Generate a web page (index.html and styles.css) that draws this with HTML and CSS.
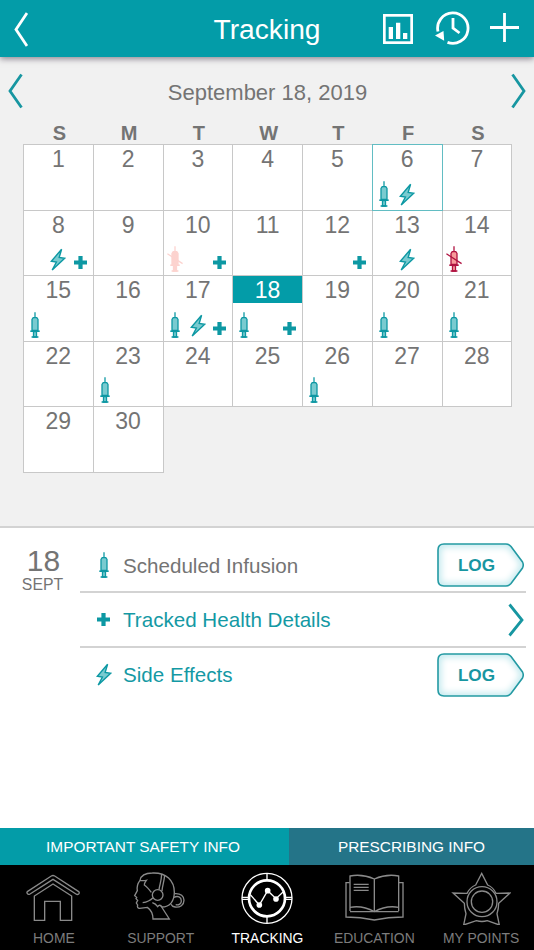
FILE: index.html
```html
<!DOCTYPE html>
<html lang="en">

<head>
    <meta charset="utf-8" />
    <title>Tracking</title>
    <meta name="viewport" content="width=device-width, initial-scale=1">
    <link rel="stylesheet" href="styles.css">
</head>

<body>
    <!-- shared icons -->
    <svg class="sprite" width="0" height="0">
        <defs>
            <filter id="glow" x="-20%" y="-20%" width="140%" height="140%">
                <feGaussianBlur stdDeviation="3" />
            </filter>
            <clipPath id="tag-clip">
                <path d="M7 1H69Q72 1 74 3.500L85.500 19Q87 22 85.500 25L74 40.500Q72 43 69 43H7Q1 43 1 37V7Q1 1 7 1Z" />
            </clipPath>
            <symbol id="syringe" viewBox="0 0 10 26">
                <path d="M5 0.300V6" stroke="currentColor" stroke-width="1.300" />
                <path class="tint" d="M2 18.500V7.500L3.200 5.700H6.800L8 7.500V18.500Z" stroke="currentColor" stroke-width="1.300" />
                <path d="M0.300 19.200H9.700" stroke="currentColor" stroke-width="1.600" />
                <path class="tint" d="M3.500 19.500V25H6.500V19.500Z" stroke="currentColor" stroke-width="1.300" />
                <path d="M1.600 25H8.400" stroke="currentColor" stroke-width="1.600" />
            </symbol>
            <symbol id="missed" viewBox="0 0 16 26">
                <use href="#syringe" x="3" y="0" width="10" height="26" />
                <path d="M0.400 7.800L15.600 17.600" stroke="currentColor" stroke-width="1.300" />
            </symbol>
            <symbol id="bolt" viewBox="0 0 16 24">
                <path class="tint" d="M11.600 1.300L1.300 13.300L6.400 14L2.200 22L14.700 10.200L9.200 9.400Z" stroke="currentColor" stroke-width="1.400" />
            </symbol>
            <symbol id="plus" viewBox="0 0 13 13">
                <path d="M4.400 0H8.600V4.400H13V8.600H8.600V13H4.400V8.600H0V4.400H4.400Z" fill="currentColor" />
            </symbol>
            <symbol id="tag" viewBox="0 0 87 44">
                <g clip-path="url(#tag-clip)">
                    <path d="M7 1H69Q72 1 74 3.500L85.500 19Q87 22 85.500 25L74 40.500Q72 43 69 43H7Q1 43 1 37V7Q1 1 7 1Z" fill="#fff" stroke="#bfe9ee" stroke-width="7" filter="url(#glow)" />
                </g>
                <path d="M7 1H69Q72 1 74 3.500L85.500 19Q87 22 85.500 25L74 40.500Q72 43 69 43H7Q1 43 1 37V7Q1 1 7 1Z" fill="none" stroke="#249aa3" stroke-width="1.600" />
            </symbol>
        </defs>
    </svg>

    <div class="app">
        <header class="header">
            <svg class="back" width="14" height="36" viewBox="0 0 14 36"><path d="M13 2L2 18.500L13 35" /></svg>
            <h1>Tracking</h1>
            <div class="actions">
                <svg width="30" height="30" viewBox="0 0 30 30">
                    <rect x="1.300" y="1.300" width="27.400" height="27.400" />
                    <path class="solid" d="M5.700 13H10V25H5.700ZM13 8.700H17.300V25H13ZM20 19H24.300V25H20Z" />
                </svg>
                <svg class="history" width="35" height="34" viewBox="0 0 35 34">
                    <path d="M3 20.500A15.200 15.200 0 1 1 12.500 31.400" />
                    <path d="M18 7V17L24.500 22" />
                    <path class="solid" d="M0 24.500L8.500 20L9.200 29.800Z" />
                </svg>
                <svg class="add" width="29" height="29" viewBox="0 0 29 29"><path d="M14.500 0V29M0 14.500H29" /></svg>
            </div>
        </header>

        <section class="calendar">
            <div class="month">
                <svg width="15" height="36" viewBox="0 0 15 36"><path d="M13.500 1.500L2 18L13.500 34.500" /></svg>
                <span>September 18, 2019</span>
                <svg width="15" height="36" viewBox="0 0 15 36"><path d="M1.500 1.500L13 18L1.500 34.500" /></svg>
            </div>
            <div class="weekdays">
                <span>S</span><span>M</span><span>T</span><span>W</span><span>T</span><span>F</span><span>S</span>
            </div>
            <div class="days">
                <div class="day"><b>1</b></div>
                <div class="day"><b>2</b></div>
                <div class="day"><b>3</b></div>
                <div class="day"><b>4</b></div>
                <div class="day"><b>5</b></div>
                <div class="day today">
                    <b>6</b>
                    <div class="marks">
                        <svg class="syringe"><use href="#syringe" /></svg>
                        <svg class="bolt"><use href="#bolt" /></svg>
                    </div>
                </div>
                <div class="day"><b>7</b></div>

                <div class="day">
                    <b>8</b>
                    <div class="marks">
                        <svg class="bolt"><use href="#bolt" /></svg>
                        <svg class="plus"><use href="#plus" /></svg>
                    </div>
                </div>
                <div class="day"><b>9</b></div>
                <div class="day">
                    <b>10</b>
                    <div class="marks">
                        <svg class="missed faded"><use href="#missed" /></svg>
                        <svg class="plus"><use href="#plus" /></svg>
                    </div>
                </div>
                <div class="day"><b>11</b></div>
                <div class="day">
                    <b>12</b>
                    <div class="marks"><svg class="plus"><use href="#plus" /></svg></div>
                </div>
                <div class="day">
                    <b>13</b>
                    <div class="marks"><svg class="bolt"><use href="#bolt" /></svg></div>
                </div>
                <div class="day">
                    <b>14</b>
                    <div class="marks"><svg class="missed"><use href="#missed" /></svg></div>
                </div>

                <div class="day">
                    <b>15</b>
                    <div class="marks"><svg class="syringe"><use href="#syringe" /></svg></div>
                </div>
                <div class="day"><b>16</b></div>
                <div class="day">
                    <b>17</b>
                    <div class="marks">
                        <svg class="syringe"><use href="#syringe" /></svg>
                        <svg class="bolt"><use href="#bolt" /></svg>
                        <svg class="plus"><use href="#plus" /></svg>
                    </div>
                </div>
                <div class="day selected">
                    <b>18</b>
                    <div class="marks">
                        <svg class="syringe"><use href="#syringe" /></svg>
                        <svg class="plus"><use href="#plus" /></svg>
                    </div>
                </div>
                <div class="day"><b>19</b></div>
                <div class="day">
                    <b>20</b>
                    <div class="marks"><svg class="syringe"><use href="#syringe" /></svg></div>
                </div>
                <div class="day">
                    <b>21</b>
                    <div class="marks"><svg class="syringe"><use href="#syringe" /></svg></div>
                </div>

                <div class="day"><b>22</b></div>
                <div class="day">
                    <b>23</b>
                    <div class="marks"><svg class="syringe"><use href="#syringe" /></svg></div>
                </div>
                <div class="day"><b>24</b></div>
                <div class="day"><b>25</b></div>
                <div class="day">
                    <b>26</b>
                    <div class="marks"><svg class="syringe"><use href="#syringe" /></svg></div>
                </div>
                <div class="day"><b>27</b></div>
                <div class="day"><b>28</b></div>

                <div class="day"><b>29</b></div>
                <div class="day"><b>30</b></div>
            </div>
        </section>

        <section class="details">
            <div class="date">
                <div class="date-day">18</div>
                <div class="date-month">SEPT</div>
            </div>
            <div class="entries">
                <div class="entry muted">
                    <span class="entry-icon"><svg class="syringe"><use href="#syringe" /></svg></span>
                    <span class="entry-name">Scheduled Infusion</span>
                    <button class="log"><svg><use href="#tag" /></svg><span>LOG</span></button>
                </div>
                <div class="entry">
                    <span class="entry-icon"><svg class="plus"><use href="#plus" /></svg></span>
                    <span class="entry-name">Tracked Health Details</span>
                    <svg class="more" width="16" height="34" viewBox="0 0 16 34"><path d="M1.500 1.500L14 17L1.500 32.500" /></svg>
                </div>
                <div class="entry">
                    <span class="entry-icon"><svg class="bolt"><use href="#bolt" /></svg></span>
                    <span class="entry-name">Side Effects</span>
                    <button class="log"><svg><use href="#tag" /></svg><span>LOG</span></button>
                </div>
            </div>
        </section>

        <div class="info">
            <a class="safety">IMPORTANT SAFETY INFO</a>
            <a class="prescribing">PRESCRIBING INFO</a>
        </div>

        <nav class="tabs">
            <a class="tab">
                <svg viewBox="70 168 180 162">
                    <path d="M84 229L155 183Q160 180 165 183L236 229Q241 233 237 237Q233 240 229 237L160 193L91 237Q86 240 83 236Q80 232 84 229Z" />
                    <path d="M104 316V243L160 207L216 243V316H182V259H135V316Z" />
                </svg>
                <span>HOME</span>
            </a>
            <a class="tab">
                <svg viewBox="391 168 180 162">
                    <path d="M421 196C424 180 440 174 458 174C500 172 524 197 524 232C524 257 512 276 486 276L509 312H460C460 296 456 286 443 277L420 280Q411 279 414 270L410 264L414 256L409 251L411 247L405 242L413 227Q410 210 421 196Q431 198 440 196Q433 205 434 210Q443 216 455 232" />
                    <circle cx="474" cy="240" r="16" />
                    <path d="M478 224C480 208 485 200 486 177M487 228C488 212 493 202 495 181M429 263Q448 260 460 248M458 263Q468 266 474 275Q480 266 487 276" />
                    <path d="M524 236C544 234 553 244 553 256C553 270 541 278 526 276Q517 275 514 268M523 247C534 241 545 246 545 258C545 266 538 271 528 269" />
                </svg>
                <span>SUPPORT</span>
            </a>
            <a class="tab active">
                <svg viewBox="51 168 180 162">
                    <circle cx="141" cy="250" r="75" />
                    <circle class="thick" cx="141" cy="250" r="54" />
                    <path d="M141 175V196M141 304V325M66 247H87M66 253H87M195 247H216M195 253H216" />
                    <path d="M91 239L118 270L143 227L168 251L190 230" />
                    <g class="dots">
                        <circle cx="118" cy="270" r="8.500" />
                        <circle cx="143" cy="227" r="8.500" />
                        <circle cx="168" cy="252" r="8.500" />
                    </g>
                </svg>
                <span>TRACKING</span>
            </a>
            <a class="tab">
                <svg viewBox="29 168 180 162">
                    <path d="M120 192Q84 176 47 183V288M120 192Q156 176 193 183V288M120 192V290" />
                    <path d="M47 277Q84 270 120 290Q156 270 193 277M47 290H193" />
                    <path d="M46 203H35V306Q78 306 120 315Q162 306 206 306V203H194" />
                    <path d="M58 208H103M58 217H103M58 226H103" />
                </svg>
                <span>EDUCATION</span>
            </a>
            <a class="tab">
                <svg viewBox="350 168 180 162">
                    <path d="M442 175L460 210Q477 217 485 235L527 234L493 265Q493 281 488 296L495 330L459 317Q443 322 426 317L388 330L395 296Q390 281 390 265L356 234L398 235Q407 217 424 210Z" />
                    <circle cx="443" cy="260" r="45" />
                    <circle cx="443" cy="260" r="32" />
                </svg>
                <span>MY POINTS</span>
            </a>
        </nav>
    </div>
</body>

</html>
```
FILE: styles.css
```css
/* base */

* {
    box-sizing: border-box;
}

body {
    margin: 0;
    font-family: "Liberation Sans", Arial, sans-serif;
    color: #747474;
}

svg {
    display: block;
    fill: none;
}

.sprite {
    position: absolute;
}

.app {
    display: flex;
    flex-direction: column;
    width: 534px;
    height: 950px;
    background-color: #fff;
}

/* header */

.header {
    display: grid;
    grid-template-columns: 1fr auto 1fr;
    align-items: center;
    height: 57px;
    padding: 0 15px 0 14px;
    background-color: #039ca8;
    box-shadow: 0 2px 6px rgba(60, 50, 70, 0.55);
    z-index: 1;
}

.header h1 {
    margin: 0;
    padding: 2px 0 0 1px;
    font-size: 28.2px;
    font-weight: normal;
    color: #fff;
}

.header svg {
    stroke: #fff;
    stroke-width: 2.8;
}

.header .solid {
    fill: #fff;
    stroke: none;
}

.actions {
    display: flex;
    justify-content: flex-end;
    align-items: center;
}

.history {
    margin: 0 20px 2px 22px;
}

.add {
    margin-bottom: 2px;
}

/* calendar */

.calendar {
    height: 471px;
    padding-top: 4px;
    background-color: #f1f1f1;
    border-bottom: 2px solid #d3d3d3;
}

.month {
    display: flex;
    justify-content: space-between;
    align-items: center;
    height: 60px;
    padding: 0 8px;
    font-size: 22px;
}

.month span {
    padding: 3px 0 0 1px;
}

.month svg,
.more {
    stroke: #1796a1;
    stroke-width: 2.8;
}

.weekdays,
.days {
    display: grid;
    grid-template-columns: repeat(7, 69.75px);
    margin-left: 23px;
}

.weekdays {
    height: 23px;
    line-height: 25px;
    font-size: 20px;
    font-weight: bold;
    text-align: center;
}

.weekdays span {
    padding-left: 3px;
}

.days {
    grid-auto-rows: 65.6px;
}

.day {
    display: flex;
    flex-direction: column;
    justify-content: space-between;
    margin: 0 -1px -1px 0;
    border: 1px solid #c8c8c8;
    background-color: #fff;
}

.day b {
    height: 27px;
    line-height: 28px;
    font-size: 23px;
    font-weight: normal;
    text-align: center;
}

.today {
    border-color: #62bdc3;
    z-index: 1;
}

.selected b {
    color: #fff;
    background-color: #039ca8;
}

.marks {
    display: grid;
    grid-template-columns: 22px 24px 20px;
    justify-items: center;
    align-items: end;
    padding-bottom: 3px;
}

/* icons */

.syringe,
.bolt,
.plus {
    color: #0d98a3;
}

.tint {
    fill: var(--tint, #79cbd0);
}

.syringe {
    grid-column: 1;
    width: 10px;
    height: 26px;
}

.bolt {
    grid-column: 2;
    width: 16px;
    height: 24px;
}

.plus {
    grid-column: 3;
    width: 13px;
    height: 13px;
    margin-bottom: 3px;
}

.missed {
    grid-column: 1;
    width: 16px;
    height: 26px;
    color: #b01240;
    --tint: #f79a9a;
}

.faded {
    color: #fcd3cf;
    --tint: #fcd3cf;
}

/* selected day */

.details {
    display: flex;
    flex: 1;
    padding: 10px 8px 0 0;
}

.date {
    width: 80px;
    padding: 6px 0 0 5px;
    text-align: center;
}

.date-day {
    padding-left: 2px;
    font-size: 30px;
    line-height: 34px;
}

.date-month {
    font-size: 15.8px;
    line-height: 14px;
}

.entries {
    flex: 1;
}

.entry {
    display: flex;
    align-items: center;
    height: 55px;
    padding-right: 2px;
    border-bottom: 2px solid #d3d3d3;
    font-size: 20.6px;
    color: #1499a4;
}

.entry:last-child {
    height: 53px;
    border-bottom: none;
}

.entry:not(.muted) .entry-name {
    padding-top: 0;
}

.muted {
    color: #747474;
}

.entry-icon {
    display: flex;
    justify-content: center;
    width: 42px;
    padding-left: 5px;
}

.entry-icon .plus {
    margin: 0;
}

.entry-name {
    flex: 1;
    padding: 2px 0 0 1px;
}

.log {
    position: relative;
    width: 87px;
    height: 44px;
    padding: 2px 8px 0 0;
    border: none;
    background: none;
    font: bold 17.2px "Liberation Sans", Arial, sans-serif;
    color: #1796a1;
}

.log svg {
    position: absolute;
    top: 0;
    left: 0;
    width: 87px;
    height: 44px;
}

.log span {
    position: relative;
}

/* info links */

.info {
    display: flex;
    height: 37px;
    line-height: 38px;
    font-size: 15.4px;
    text-align: center;
    color: #fff;
}

.safety {
    width: 289px;
    padding-right: 3px;
    background-color: #039ca8;
}

.prescribing {
    flex: 1;
    background-color: #247488;
}

/* bottom tabs */

.tabs {
    display: grid;
    grid-template-columns: repeat(5, 1fr);
    height: 85px;
    padding-top: 6px;
    background-color: #000;
}

.tab {
    display: flex;
    flex-direction: column;
    align-items: center;
    gap: 4px;
    font-size: 13.9px;
    line-height: 18px;
    color: #7c7c7c;
    white-space: nowrap;
}

.tab span {
    padding-left: 1px;
}

.tab svg {
    width: 60px;
    height: 54px;
    stroke: #8a8a8a;
    stroke-width: 4;
}

.active {
    color: #fff;
}

.active svg {
    stroke: #fff;
}

.active .thick {
    stroke-width: 8;
}

.dots {
    fill: #fff;
    stroke: none;
}
```
